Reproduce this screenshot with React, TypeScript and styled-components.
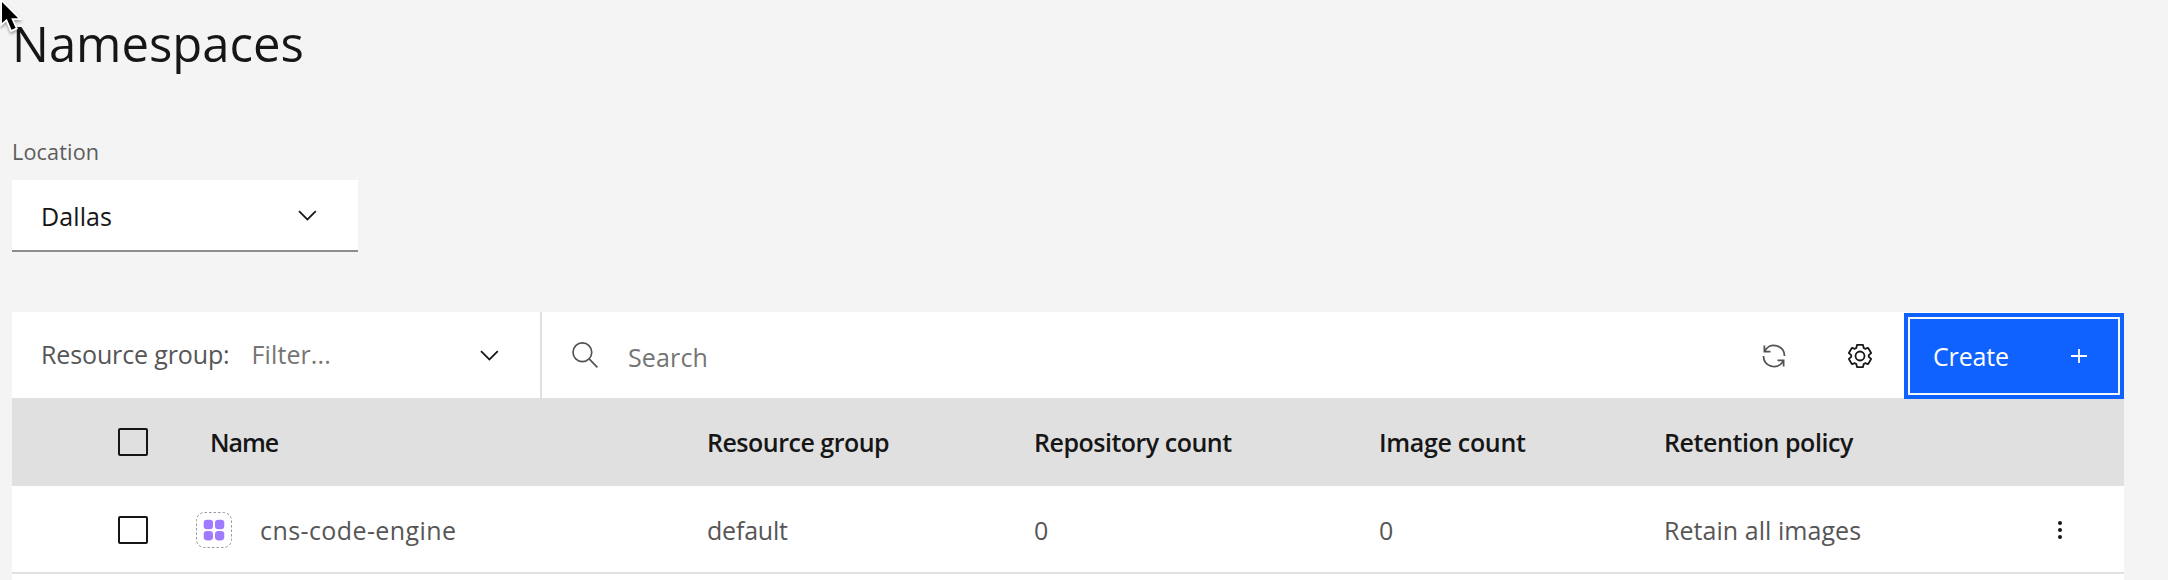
import React from "react";
import styled, { createGlobalStyle } from "styled-components";

const GlobalStyle = createGlobalStyle`
  *, *::before, *::after { box-sizing: border-box; }
  html, body { margin: 0; height: 580px; overflow: hidden; background: #f4f4f4; }
  body { font-family: "Open Sans", "Noto Sans", sans-serif; font-size: 25px; color: #161616; }
  svg { display: block; flex: none; }
`;

const Page = styled.main`
  position: relative;
  display: flex;
  flex-direction: column;
  align-items: flex-start;
  width: 2168px;
  height: 580px;
  padding: 13px 44px 0 12px;
  overflow: hidden;
`;

const Title = styled.h1`
  margin: 0 0 65px;
  font-size: 49px;
  line-height: 60px;
  font-weight: 400;
  letter-spacing: 0;
`;

const Text = styled.span<{ $spacing?: number; $nudge?: number }>`
  line-height: 34px;
  white-space: nowrap;
  letter-spacing: ${(p) => p.$spacing ?? 0}px;
  margin-top: ${(p) => p.$nudge ?? 0}px;
`;

const FieldLabel = styled.label`
  margin-bottom: 14px;
  font-size: 21.6px;
  line-height: 28px;
  letter-spacing: 0.15px;
  color: #5c5c5c;
`;

const Dropdown = styled.div`
  display: flex;
  flex: none;
  align-items: center;
  justify-content: space-between;
  width: 346px;
  height: 72px;
  margin-bottom: 60px;
  padding: 0 36px 0 29px;
  background: #fff;
  border-bottom: 2px solid #8d8d8d;
`;

const Panel = styled.section`
  flex: none;
  width: 2112px;
  background: #fff;
`;

const Toolbar = styled.div`
  display: flex;
  height: 86px;
`;

const GroupFilter = styled.div`
  display: flex;
  align-items: center;
  width: 530px;
  padding: 0 36px 0 29px;
  border-right: 2px solid #e0e0e0;
  color: #565656;
`;

const Placeholder = styled(Text)`
  color: #757575;
`;

const FilterValue = styled(Placeholder)`
  flex: 1;
  margin-left: 22px;
`;

const SearchBox = styled.div`
  display: flex;
  flex: 1;
  align-items: center;
  gap: 28px;
  padding-left: 28px;
`;

const IconButton = styled.button`
  display: flex;
  align-items: center;
  justify-content: center;
  width: 86px;
  padding: 2px 2px 0 0;
  border: 0;
  background: transparent;
`;

const CreateButton = styled.button`
  position: relative;
  top: 1px;
  display: flex;
  align-items: center;
  justify-content: space-between;
  width: 220px;
  height: 86px;
  padding: 0 33px 0 25px;
  border: 4px solid #0f62fe;
  background: #0f62fe;
  box-shadow: inset 0 0 0 2px #f4f8ff;
  color: #fff;
  font: inherit;
`;

const Row = styled.div<{ $header?: boolean }>`
  display: grid;
  grid-template-columns: 182px 513px 327px 345px 285px 1fr 128px;
  align-items: center;
  height: 88px;
  padding-top: ${(p) => (p.$header ? 0 : 2)}px;
  background: ${(p) => (p.$header ? "#e0e0e0" : "#fff")};
  border-bottom: ${(p) => (p.$header ? "0" : "2px solid #e0e0e0")};
  color: ${(p) => (p.$header ? "#161616" : "#565656")};
  font-weight: ${(p) => (p.$header ? 650 : 400)};
`;

const Checkbox = styled.span`
  width: 30px;
  height: 28px;
  margin-left: 106px;
  border: 2px solid #161616;
  border-radius: 2px;
`;

const NameCell = styled.div<{ $header?: boolean }>`
  display: flex;
  align-items: center;
  gap: 28px;
  padding-left: ${(p) => (p.$header ? 16 : 2)}px;
`;

const Pointer = styled.svg`
  position: absolute;
  left: 0;
  top: 0;
  filter: drop-shadow(0 2px 1.5px rgba(0, 0, 0, 0.35));
`;

const ChevronDown = () => (
  <svg width="28.8" height="28.8" viewBox="0 0 16 16" fill="#161616">
    <path d="M8 11 3 6l.7-.7L8 9.6l4.3-4.3.7.7z" />
  </svg>
);

const SearchIcon = () => (
  <svg width="30" height="30" viewBox="0 0 16 16" fill="none" stroke="#525252" strokeWidth="0.9">
    <circle cx="6.6" cy="6.5" r="5" />
    <path d="m10.2 10.1 4.4 4.5" />
  </svg>
);

const RenewIcon = () => (
  <svg width="28" height="28" viewBox="0 0 32 32" fill="#525252">
    <path d="M12 10H6.78A11 11 0 0 1 27 16h2A13 13 0 0 0 6 7.68V4H4v8h8z" />
    <path d="M20 22h5.22A11 11 0 0 1 5 16H3a13 13 0 0 0 23 8.32V28h2v-8h-8z" />
  </svg>
);

const toothProfile = [[-3.7, -8], [-3, -11.1], [3, -11.1], [3.7, -8]];
const gearPoints = Array.from({ length: 6 }, (_, i) => {
  const a = (i * Math.PI) / 3;
  return toothProfile.map(([x, y]) =>
    [x * Math.cos(a) - y * Math.sin(a), x * Math.sin(a) + y * Math.cos(a)].map((n) => n.toFixed(2)).join(",")
  );
}).flat().join(" ");

const SettingsIcon = () => (
  <svg width="28" height="28" viewBox="-14 -14 28 28" fill="none" stroke="#161616" strokeWidth="1.8" strokeLinejoin="round">
    <polygon points={gearPoints} />
    <circle r="4.5" />
  </svg>
);

const AddIcon = () => (
  <svg width="16" height="16" viewBox="0 0 16 16" fill="none" stroke="#fff" strokeWidth="1.8">
    <path d="M8 1v14M0 8h16" />
  </svg>
);

const NamespaceIcon = () => (
  <svg width="36" height="36" viewBox="0 0 36 36">
    <rect x=".5" y=".5" width="35" height="35" rx="8" fill="none" stroke="#999" strokeDasharray="2.5 2" />
    <g fill="#a07bff">
      <rect x="7.7" y="7.8" width="9.3" height="9.4" rx="3.3" />
      <rect x="19" y="7.8" width="9.3" height="9.4" rx="3.3" />
      <rect x="7.7" y="19" width="9.3" height="9.4" rx="3.3" />
      <rect x="19" y="19" width="9.3" height="9.4" rx="3.3" />
    </g>
  </svg>
);

const OverflowIcon = () => (
  <svg width="128" height="20" viewBox="0 0 128 20" fill="#161616">
    <circle cx="64" cy="3" r="2" />
    <circle cx="64" cy="10" r="2" />
    <circle cx="64" cy="17" r="2" />
  </svg>
);

export default function App() {
  return (
    <>
      <GlobalStyle />
      <Page>
        <Title>Namespaces</Title>
        <FieldLabel>Location</FieldLabel>
        <Dropdown>
          <Text $spacing={0.1} $nudge={2}>Dallas</Text>
          <ChevronDown />
        </Dropdown>
        <Panel>
          <Toolbar>
            <GroupFilter>
              <Text $spacing={-0.13} $nudge={-2}>Resource group:</Text>
              <FilterValue $spacing={0.1} $nudge={-2}>Filter...</FilterValue>
              <ChevronDown />
            </GroupFilter>
            <SearchBox>
              <SearchIcon />
              <Placeholder $spacing={0.15} $nudge={3}>Search</Placeholder>
            </SearchBox>
            <IconButton aria-label="Refresh"><RenewIcon /></IconButton>
            <IconButton aria-label="Settings"><SettingsIcon /></IconButton>
            <CreateButton>
              <Text $spacing={-0.16}>Create</Text>
              <AddIcon />
            </CreateButton>
          </Toolbar>
          <Row $header>
            <Checkbox />
            <NameCell $header><Text $spacing={-1.1}>Name</Text></NameCell>
            <Text $spacing={-0.5}>Resource group</Text>
            <Text $spacing={-0.49}>Repository count</Text>
            <Text $spacing={-0.32}>Image count</Text>
            <Text $spacing={-0.41}>Retention policy</Text>
          </Row>
          <Row>
            <Checkbox />
            <NameCell>
              <NamespaceIcon />
              <Text $spacing={0.41}>cns-code-engine</Text>
            </NameCell>
            <Text $spacing={-0.2}>default</Text>
            <Text>0</Text>
            <Text>0</Text>
            <Text $spacing={0.05}>Retain all images</Text>
            <OverflowIcon />
          </Row>
          <Row />
        </Panel>
        <Pointer width="26" height="40" viewBox="0 0 26 40" aria-hidden="true">
          <path
            d="M2 2V23l4.8-4.3 4.7 11.1 4.1-1.8-4.4-9.8h7z"
            fill="#000"
            stroke="#fff"
            strokeWidth="3.6"
            paintOrder="stroke"
          />
        </Pointer>
      </Page>
    </>
  );
}
